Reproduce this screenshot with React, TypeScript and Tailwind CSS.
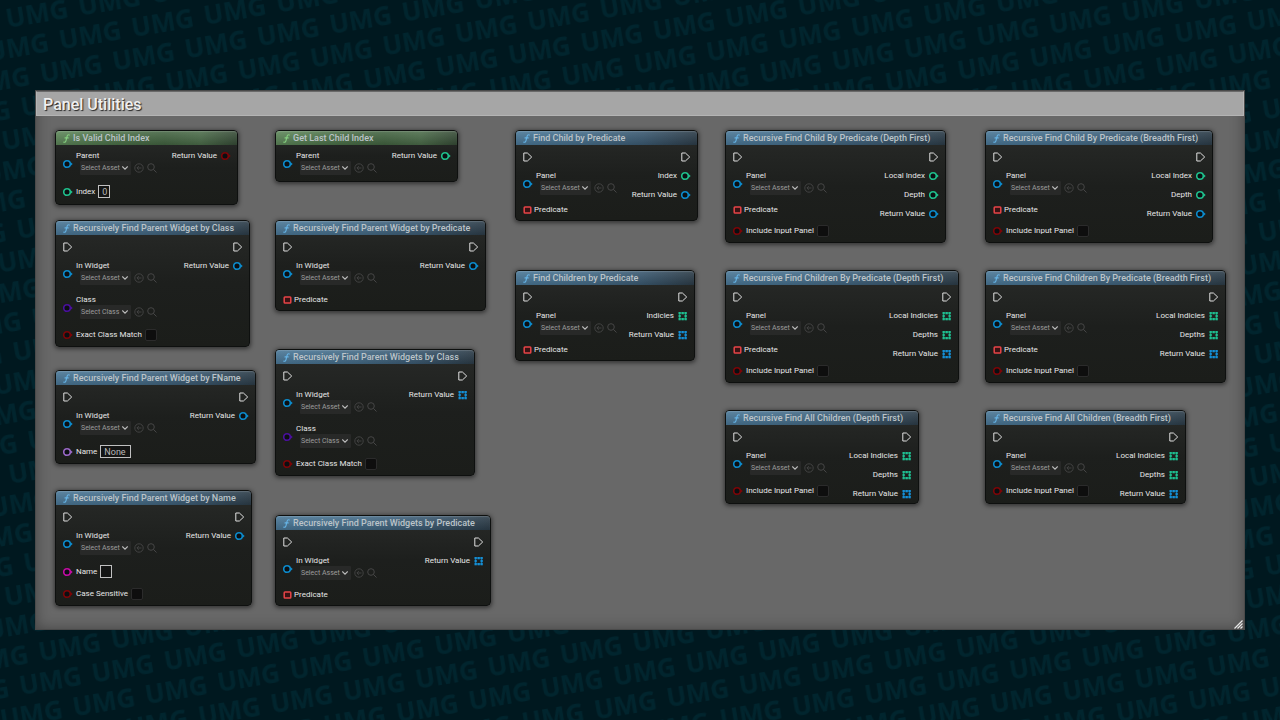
import { useId } from "react";

type PinKind = "object" | "int" | "bool" | "class" | "name" | "string" | "delegate" | "intArray" | "objectArray";

type Input =
  | { kind: "asset"; label: string; pin: PinKind; pick: string }
  | { kind: "check"; label: string }
  | { kind: "text"; label: string; pin: PinKind; value: string; size: string }
  | { kind: "delegate"; label: string };

type Output = { label: string; pin: PinKind };

type NodeData = {
  title: string;
  place: string;
  pure?: boolean;
  inputs: Input[];
  outputs: Output[];
};

const pinColor: Record<PinKind, string> = {
  object: "text-[#0c8bcc]",
  int: "text-[#1fc08c]",
  bool: "text-[#7c0507]",
  class: "text-[#4a0f9e]",
  name: "text-[#9a68c6]",
  string: "text-[#c40ca4]",
  delegate: "text-[#e84447]",
  intArray: "text-[#1fc091]",
  objectArray: "text-[#1590d6]",
};

const asset = (label: string): Input => ({ kind: "asset", label, pin: "object", pick: "Select Asset" });
const classPick: Input = { kind: "asset", label: "Class", pin: "class", pick: "Select Class" };
const check = (label: string): Input => ({ kind: "check", label });
const predicate: Input = { kind: "delegate", label: "Predicate" };
const returnValue: Output = { label: "Return Value", pin: "object" };
const returnArray: Output = { label: "Return Value", pin: "objectArray" };

const single: Output[] = [{ label: "Local Index", pin: "int" }, { label: "Depth", pin: "int" }, returnValue];
const many: Output[] = [{ label: "Local Indicies", pin: "intArray" }, { label: "Depths", pin: "intArray" }, returnArray];

const nodes: NodeData[] = [
  {
    title: "Is Valid Child Index",
    place: "left-[19px] top-[14px] w-[183px]",
    pure: true,
    inputs: [asset("Parent"), { kind: "text", label: "Index", pin: "int", value: "0", size: "w-[12px]" }],
    outputs: [{ label: "Return Value", pin: "bool" }],
  },
  {
    title: "Get Last Child Index",
    place: "left-[239px] top-[14px] w-[183px]",
    pure: true,
    inputs: [asset("Parent")],
    outputs: [{ label: "Return Value", pin: "int" }],
  },
  {
    title: "Find Child by Predicate",
    place: "left-[479px] top-[14px] w-[183px]",
    inputs: [asset("Panel"), predicate],
    outputs: [{ label: "Index", pin: "int" }, returnValue],
  },
  {
    title: "Recursive Find Child By Predicate (Depth First)",
    place: "left-[689px] top-[14px] w-[221px]",
    inputs: [asset("Panel"), predicate, check("Include Input Panel")],
    outputs: single,
  },
  {
    title: "Recursive Find Child By Predicate (Breadth First)",
    place: "left-[949px] top-[14px] w-[228px]",
    inputs: [asset("Panel"), predicate, check("Include Input Panel")],
    outputs: single,
  },
  {
    title: "Recursively Find Parent Widget by Class",
    place: "left-[19px] top-[104px] w-[195px]",
    inputs: [asset("In Widget"), classPick, check("Exact Class Match")],
    outputs: [returnValue],
  },
  {
    title: "Recursively Find Parent Widget by Predicate",
    place: "left-[239px] top-[104px] w-[211px]",
    inputs: [asset("In Widget"), predicate],
    outputs: [returnValue],
  },
  {
    title: "Find Children by Predicate",
    place: "left-[479px] top-[154px] w-[180px]",
    inputs: [asset("Panel"), predicate],
    outputs: [{ label: "Indicies", pin: "intArray" }, returnArray],
  },
  {
    title: "Recursive Find Children By Predicate (Depth First)",
    place: "left-[689px] top-[154px] w-[234px]",
    inputs: [asset("Panel"), predicate, check("Include Input Panel")],
    outputs: many,
  },
  {
    title: "Recursive Find Children By Predicate (Breadth First)",
    place: "left-[949px] top-[154px] w-[241px]",
    inputs: [asset("Panel"), predicate, check("Include Input Panel")],
    outputs: many,
  },
  {
    title: "Recursively Find Parent Widget by FName",
    place: "left-[19px] top-[254px] w-[201px]",
    inputs: [asset("In Widget"), { kind: "text", label: "Name", pin: "name", value: "None", size: "w-[31px]" }],
    outputs: [returnValue],
  },
  {
    title: "Recursively Find Parent Widgets by Class",
    place: "left-[239px] top-[233px] w-[200px]",
    inputs: [asset("In Widget"), classPick, check("Exact Class Match")],
    outputs: [returnArray],
  },
  {
    title: "Recursively Find Parent Widget by Name",
    place: "left-[19px] top-[374px] w-[197px]",
    inputs: [asset("In Widget"), { kind: "text", label: "Name", pin: "string", value: "", size: "w-[12px]" }, check("Case Sensitive")],
    outputs: [returnValue],
  },
  {
    title: "Recursively Find Parent Widgets by Predicate",
    place: "left-[239px] top-[399px] w-[216px]",
    inputs: [asset("In Widget"), predicate],
    outputs: [returnArray],
  },
  {
    title: "Recursive Find All Children (Depth First)",
    place: "left-[689px] top-[294px] w-[194px]",
    inputs: [asset("Panel"), check("Include Input Panel")],
    outputs: many,
  },
  {
    title: "Recursive Find All Children (Breadth First)",
    place: "left-[949px] top-[294px] w-[201px]",
    inputs: [asset("Panel"), check("Include Input Panel")],
    outputs: many,
  },
];

function Pin({ kind }: { kind: PinKind }) {
  const tone = `${pinColor[kind]} h-[10px] w-[10px] shrink-0`;
  if (kind === "delegate") {
    return (
      <svg className={tone} viewBox="0 0 10 10" aria-hidden="true">
        <rect x="1.200" y="1.900" width="6.600" height="6.200" rx="0.800" fill="#3a1214" stroke="currentColor" strokeWidth="1.500" />
      </svg>
    );
  }
  if (kind === "intArray" || kind === "objectArray") {
    return (
      <svg className={tone} viewBox="0 0 10 10" fill="currentColor" aria-hidden="true">
        {[1, 4, 7].map((y) =>
          [0.5, 3.5, 6.5].map((x) => (x === 3.5 && y === 4 ? null : <rect key={`${x}-${y}`} x={x} y={y} width="2.3" height="2.3" />)),
        )}
        <path d="M1.500 2h6v6h-6z" fill="none" stroke="currentColor" strokeWidth="1" opacity="0.6" />
      </svg>
    );
  }
  return (
    <svg className={tone} viewBox="0 0 10 10" aria-hidden="true">
      <circle cx="4" cy="5" r="3.300" fill="#0b0f12" stroke="currentColor" strokeWidth="1.600" />
      <path d="M7.400 2.900 9.700 5 7.400 7.100z" fill="currentColor" />
    </svg>
  );
}

function ExecPin() {
  return (
    <svg className="h-[10px] w-[10px]" viewBox="0 0 10 10" fill="none" stroke="#e0e0e0" strokeWidth="1" strokeLinejoin="round" aria-hidden="true">
      <path d="M.8 1h3.600L8.700 5 4.400 9H.8z" />
    </svg>
  );
}

function AssetInput({ item }: { item: Extract<Input, { kind: "asset" }> }) {
  const id = useId();
  return (
    <div className="flex h-[34px] gap-[3px]">
      <div className="pt-[13px]">
        <Pin kind={item.pin} />
      </div>
      <div className="flex flex-col pt-[5px]">
        <label htmlFor={id} className="h-[10px] leading-[10px]">
          {item.label}
        </label>
        <div className="ml-[4px] flex items-center gap-[3px]">
          <div className="relative h-[14px] w-[51px]">
            <select
              id={id}
              className="block h-full w-full appearance-none rounded-[1px] bg-[#282928] pl-[1px] text-[7px] leading-[14px] font-normal text-[#9c9c9c]"
            >
              <option>{item.pick}</option>
            </select>
            <svg className="pointer-events-none absolute top-[4px] right-[3px] h-[6px] w-[6px]" viewBox="0 0 6 6" fill="none" stroke="#bcbcbc" strokeWidth="1.100" aria-hidden="true">
              <path d="M.3 1.500 3 4.200l2.700-2.700" />
            </svg>
          </div>
          <button type="button" aria-label="Use selected asset" className="h-[10px] w-[10px]">
            <svg viewBox="0 0 10 10" fill="none" stroke="#464646" strokeWidth="0.900" aria-hidden="true">
              <circle cx="5" cy="5" r="4.200" />
              <path d="M7.500 5H3M4.800 3.100 2.900 5l1.900 1.900" />
            </svg>
          </button>
          <button type="button" aria-label="Browse to asset" className="h-[10px] w-[10px]">
            <svg viewBox="0 0 10 10" fill="none" stroke="#464646" strokeWidth="1" aria-hidden="true">
              <circle cx="4" cy="4" r="3.300" />
              <path d="M6.400 6.400 9.500 9.500" />
            </svg>
          </button>
        </div>
      </div>
    </div>
  );
}

function CheckInput({ label }: { label: string }) {
  const id = useId();
  return (
    <div className="flex h-[22px] items-center gap-[3px]">
      <Pin kind="bool" />
      <label htmlFor={id}>{label}</label>
      <input id={id} type="checkbox" className="h-[12px] w-[12px] appearance-none rounded-[2px] border border-[#2b2b2b] bg-[#0e0e0e] checked:bg-[#26bbff]" />
    </div>
  );
}

function TextInput({ item }: { item: Extract<Input, { kind: "text" }> }) {
  const id = useId();
  return (
    <div className="flex h-[23px] items-center gap-[3px]">
      <Pin kind={item.pin} />
      <label htmlFor={id}>{item.label}</label>
      <input
        id={id}
        type="text"
        defaultValue={item.value}
        className={`h-[13px] border border-[#c0c0c0] bg-[#141514] pl-[3px] text-[9px] leading-[11px] font-normal text-[#b8b8b8] ${item.size}`}
      />
    </div>
  );
}

function InputRow({ item }: { item: Input }) {
  if (item.kind === "asset") return <AssetInput item={item} />;
  if (item.kind === "check") return <CheckInput label={item.label} />;
  if (item.kind === "text") return <TextInput item={item} />;
  return (
    <div className="flex h-[20px] items-center gap-[1px]">
      <Pin kind="delegate" />
      <span>{item.label}</span>
    </div>
  );
}

function GraphNode({ node }: { node: NodeData }) {
  const headTone = node.pure
    ? "bg-[linear-gradient(180deg,rgba(255,255,255,0.12),rgba(0,0,0,0.15)),linear-gradient(90deg,#5c8658_0%,#4a6f47_35%,#426340_60%,#4b6c49_80%,#354a35_100%)]"
    : "bg-[linear-gradient(180deg,rgba(255,255,255,0.1),rgba(0,0,0,0.15)),linear-gradient(90deg,#4a7898_0%,#456c88_40%,#3b5a72_70%,#2c3c48_100%)]";
  return (
    <article
      className={`absolute rounded-[4px] border border-[#0e100f] bg-[linear-gradient(180deg,#282a28,#1d1f1d_50%,#1b1d1a)] shadow-[0_1px_4px_1px_rgba(0,0,0,0.5)] ${node.place}`}
    >
      <header className={`flex h-[14px] items-center gap-[3px] rounded-t-[3px] pt-[1px] pl-[7px] shadow-[0_1px_1px_rgba(255,255,255,0.15)_inset] ${headTone}`}>
        <svg className={`h-[9px] w-[7px] ${node.pure ? "text-[#86cf81]" : "text-[#66b4e6]"}`} viewBox="0 0 7 9" fill="none" stroke="currentColor" strokeWidth="1.100" strokeLinecap="round" aria-hidden="true">
          <path d="M6.300 1C4.800.4 4.300 1.200 4 2.600L3 6.600C2.700 8 2.100 8.500.8 8.100M2 3.900h3.200" />
        </svg>
        <h2 className="text-[9px] leading-[13px] font-medium whitespace-nowrap text-[#bcc4c9]">{node.title}</h2>
      </header>
      <div className={`pr-[6px] pl-[7px] ${node.pure ? "pt-[1px] pb-[1px]" : "pt-[3px]"}`}>
        {!node.pure && (
          <div className="flex h-[18px] items-center justify-between">
            <ExecPin />
            <ExecPin />
          </div>
        )}
        <div className="flex items-start justify-between">
          <div className="flex flex-col">
            {node.inputs.map((item) => (
              <InputRow key={item.label} item={item} />
            ))}
          </div>
          <ul className="flex flex-col">
            {node.outputs.map((out) => (
              <li key={out.label} className="flex h-[19px] items-center justify-end gap-[4px]">
                <span>{out.label}</span>
                <Pin kind={out.pin} />
              </li>
            ))}
          </ul>
        </div>
      </div>
    </article>
  );
}

function Watermark() {
  return (
    <svg className="pointer-events-none absolute inset-0 h-full w-full" aria-hidden="true">
      <defs>
        <pattern id="umg" width="73.400" height="90" patternUnits="userSpaceOnUse" patternTransform="translate(37 14) rotate(-9.600)">
          <g fill="#01252e" fontFamily="'Noto Sans', sans-serif" fontWeight="700" fontSize="26" textAnchor="middle">
            {[0, 1, 2, 3].map((row) =>
              [-1, 0, 1, 2, 3].map((col) => (
                <text key={`${row}-${col}`} x={col * 73.4 - row * 24.47} y={row * 30 + 9}>
                  UMG
                </text>
              )),
            )}
          </g>
        </pattern>
      </defs>
      <rect width="100%" height="100%" fill="url(#umg)" />
    </svg>
  );
}

export default function App() {
  return (
    <main className="relative flex min-h-screen flex-col bg-[#00181f] px-[35px] pt-[90px] pb-[90px] font-['Roboto',sans-serif] text-[8px] leading-[10px] font-normal text-[#e6e6e6]">
      <Watermark />
      <section className="relative flex grow flex-col border border-[#4a4a4a] bg-[#686868] shadow-[inset_0_0_14px_rgba(0,0,0,0.35)]">
        <header className="flex h-[25px] items-center border border-[#b4b4b4] border-t-[#6a6a6a] bg-[#a6a6a6] pt-[2px] pl-[6px]">
          <h1 className="text-[16px] leading-[20px] font-medium text-[#f0f0f0] [text-shadow:1px_1px_1px_#222]">Panel Utilities</h1>
        </header>
        <div className="relative grow">
          {nodes.map((node) => (
            <GraphNode key={node.title} node={node} />
          ))}
          <svg className="absolute right-[1px] bottom-0 h-[9px] w-[9px]" viewBox="0 0 9 9" stroke="#e8e8e8" strokeWidth="1.200" aria-hidden="true">
            <path d="M.5 8.500 8.500.5M3.500 8.500l5-5M6.500 8.500l2-2" />
          </svg>
        </div>
      </section>
    </main>
  );
}
